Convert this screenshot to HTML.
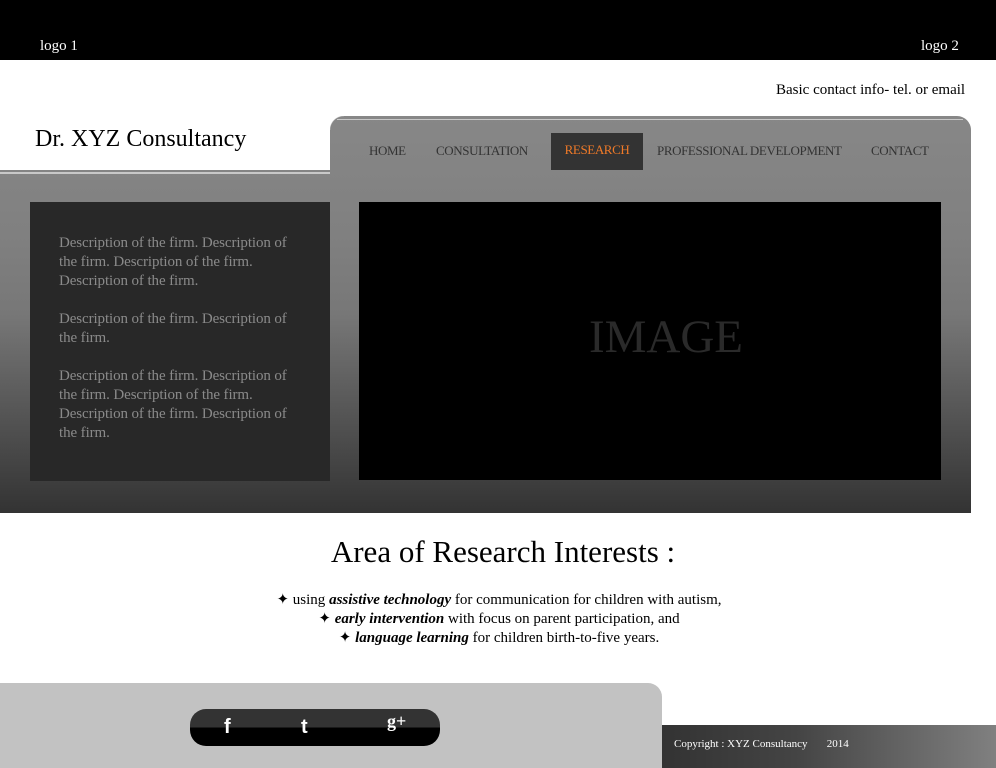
<!DOCTYPE html>
<html><head><meta charset="utf-8"><style>
*{margin:0;padding:0;box-sizing:border-box}
body{width:996px;height:768px;position:relative;background:#fff;font-family:"Liberation Serif",serif;overflow:hidden}
.abs{position:absolute}
.top{left:0;top:0;width:996px;height:60px;background:#000;color:#fff;font-size:15px}
.gray{left:0;top:116px;width:971px;height:397px;background:linear-gradient(#878787,#808080 30%,#777 50%,#333);border-radius:0 14px 0 0}
.nav{top:143px;font-size:13px;color:#333;height:27px;line-height:16px;letter-spacing:-0.4px}
.desc{left:30px;top:202px;width:300px;height:279px;background:#282828;color:#8a8a8a;font-size:15px;line-height:19px;padding:32px 29px;letter-spacing:-0.1px}
.desc p{margin-bottom:19px}
.img{left:359px;top:202px;width:582px;height:278px;background:#000;color:#2a2a2a;font-size:47px;text-align:center;line-height:270px;padding-left:32px}
</style></head><body>
<div class="abs top"><span class="abs" style="left:40px;top:38px">logo 1</span><span class="abs" style="left:921px;top:38px">logo 2</span></div>
<div class="abs" style="left:776px;top:82px;font-size:15px">Basic contact info- tel. or email</div>
<div class="abs gray"></div>
<div class="abs" style="left:0;top:110px;width:330px;height:60px;background:#fff"></div>
<div class="abs" style="left:330px;top:116px;width:14px;height:14px;background:radial-gradient(circle at 14px 14px,transparent 13.5px,#fff 14.5px)"></div>
<div class="abs" style="left:35px;top:126px;font-size:24px">Dr. XYZ Consultancy</div>
<div class="abs" style="left:0;top:172px;width:330px;height:2px;background:#c8c8c8"></div>
<div class="abs" style="left:337px;top:119px;width:626px;height:1px;background:#c8c8c8"></div>
<div class="abs nav" style="left:369px">HOME</div>
<div class="abs nav" style="left:436px">CONSULTATION</div>
<div class="abs" style="left:551px;top:133px;width:92px;height:37px;background:#333;color:#f07a28;font-size:13px;line-height:34px;text-align:center;letter-spacing:-0.4px">RESEARCH</div>
<div class="abs nav" style="left:657px">PROFESSIONAL DEVELOPMENT</div>
<div class="abs nav" style="left:871px">CONTACT</div>
<div class="abs desc"><p>Description of the firm. Description of the firm. Description of the firm. Description of the firm.</p><p>Description of the firm. Description of the firm.</p><p>Description of the firm. Description of the firm. Description of the firm. Description of the firm. Description of the firm.</p></div>
<div class="abs img">IMAGE</div>
<div class="abs" style="left:0;top:534px;width:1006px;text-align:center;font-size:31px">Area of Research Interests :</div>
<div class="abs" style="left:0;top:591px;width:998px;text-align:center;font-size:15px;line-height:19px">✦ using <b><i>assistive technology</i></b> for communication for children with autism,<br>✦ <b><i>early intervention</i></b> with focus on parent participation, and<br>✦ <b><i>language learning</i></b> for children birth-to-five years.</div>
<div class="abs" style="left:0;top:683px;width:662px;height:85px;background:#c2c2c2;border-radius:0 14px 0 0"></div>
<div class="abs" style="left:190px;top:709px;width:250px;height:37px;border-radius:16px;overflow:hidden;background:linear-gradient(#333 0,#333 50%,#000 50%)"></div>
<div class="abs" style="left:224px;top:716px;color:#fff;font:bold 20px 'Liberation Sans',sans-serif">f</div>
<div class="abs" style="left:301px;top:716px;color:#fff;font:bold 20px 'Liberation Sans',sans-serif">t</div>
<div class="abs" style="left:387px;top:711px;color:#fff;font:bold 18px 'Liberation Serif',serif">g+</div>
<div class="abs" style="left:662px;top:725px;width:334px;height:43px;background:linear-gradient(90deg,#333,#444 40%,#808080);color:#fff;font-size:11px;line-height:38px;padding-left:12px">Copyright : XYZ Consultancy &nbsp;&nbsp;&nbsp;&nbsp;&nbsp; 2014</div>
</body></html>
